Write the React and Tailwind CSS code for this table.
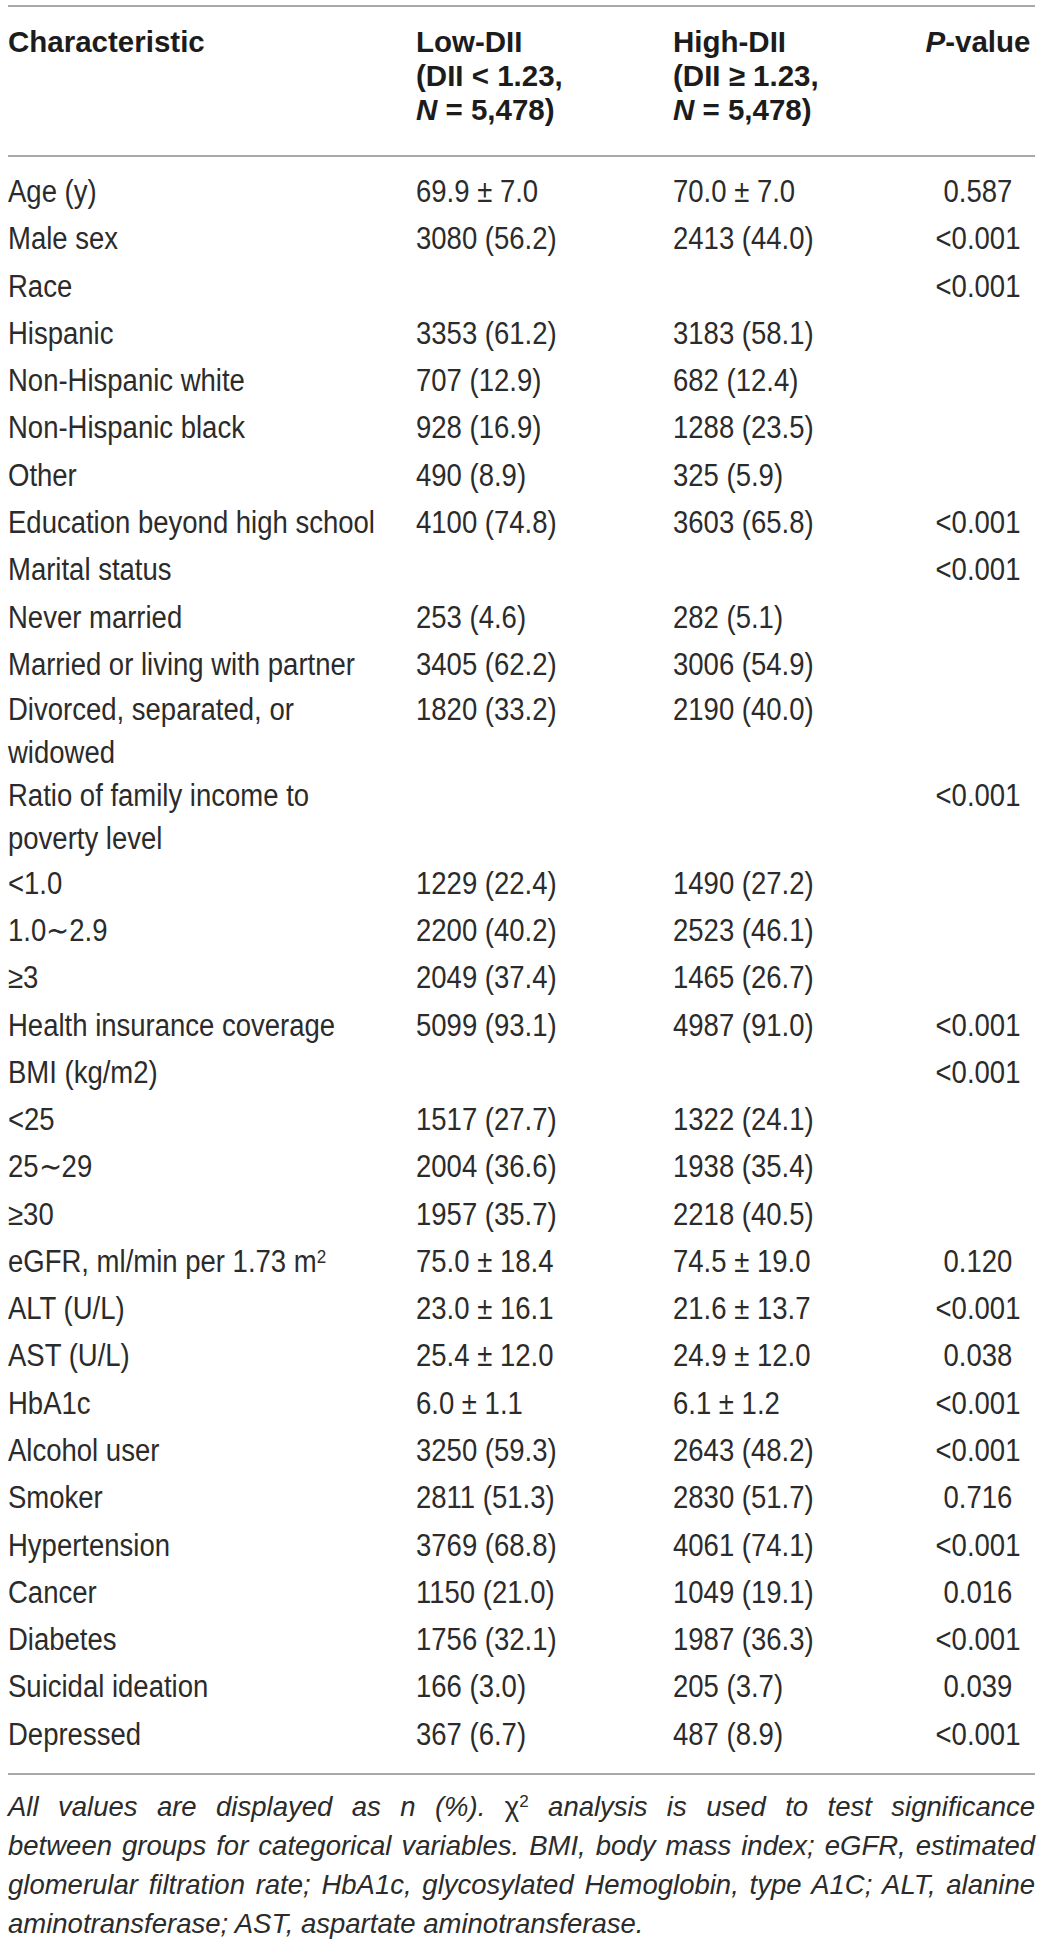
import React from "react";

const sans = { fontFamily: '"Liberation Sans", Arial, sans-serif' };

const rows = [
  ["Age (y)", "69.9 ± 7.0", "70.0 ± 7.0", "0.587"],
  ["Male sex", "3080 (56.2)", "2413 (44.0)", "<0.001"],
  ["Race", "", "", "<0.001"],
  ["Hispanic", "3353 (61.2)", "3183 (58.1)", ""],
  ["Non-Hispanic white", "707 (12.9)", "682 (12.4)", ""],
  ["Non-Hispanic black", "928 (16.9)", "1288 (23.5)", ""],
  ["Other", "490 (8.9)", "325 (5.9)", ""],
  ["Education beyond high school", "4100 (74.8)", "3603 (65.8)", "<0.001"],
  ["Marital status", "", "", "<0.001"],
  ["Never married", "253 (4.6)", "282 (5.1)", ""],
  ["Married or living with partner", "3405 (62.2)", "3006 (54.9)", ""],
  [["Divorced, separated, or", "widowed"], "1820 (33.2)", "2190 (40.0)", ""],
  [["Ratio of family income to", "poverty level"], "", "", "<0.001"],
  ["<1.0", "1229 (22.4)", "1490 (27.2)", ""],
  ["1.0∼2.9", "2200 (40.2)", "2523 (46.1)", ""],
  ["≥3", "2049 (37.4)", "1465 (26.7)", ""],
  ["Health insurance coverage", "5099 (93.1)", "4987 (91.0)", "<0.001"],
  ["BMI (kg/m2)", "", "", "<0.001"],
  ["<25", "1517 (27.7)", "1322 (24.1)", ""],
  ["25∼29", "2004 (36.6)", "1938 (35.4)", ""],
  ["≥30", "1957 (35.7)", "2218 (40.5)", ""],
  ["egfr", "75.0 ± 18.4", "74.5 ± 19.0", "0.120"],
  ["ALT (U/L)", "23.0 ± 16.1", "21.6 ± 13.7", "<0.001"],
  ["AST (U/L)", "25.4 ± 12.0", "24.9 ± 12.0", "0.038"],
  ["HbA1c", "6.0 ± 1.1", "6.1 ± 1.2", "<0.001"],
  ["Alcohol user", "3250 (59.3)", "2643 (48.2)", "<0.001"],
  ["Smoker", "2811 (51.3)", "2830 (51.7)", "0.716"],
  ["Hypertension", "3769 (68.8)", "4061 (74.1)", "<0.001"],
  ["Cancer", "1150 (21.0)", "1049 (19.1)", "0.016"],
  ["Diabetes", "1756 (32.1)", "1987 (36.3)", "<0.001"],
  ["Suicidal ideation", "166 (3.0)", "205 (3.7)", "0.039"],
  ["Depressed", "367 (6.7)", "487 (8.9)", "<0.001"],
];

const Rule = () => <div className="h-[2px] bg-[#a9a9a9]" />;

const Label = ({ value }) => {
  if (value === "egfr") {
    return (
      <span>
        eGFR, ml/min per 1.73 m<sup className="text-[0.62em]">2</sup>
      </span>
    );
  }
  if (Array.isArray(value)) {
    return (
      <span>
        {value[0]}
        <br />
        {value[1]}
      </span>
    );
  }
  return <span>{value}</span>;
};

const FootLine = ({ children, last }) => (
  <div className={last ? "whitespace-nowrap text-left" : "text-justify [text-align-last:justify]"}>{children}</div>
);

export default function App() {
  return (
    <div className="w-[1043px] bg-white px-2 pt-[5px] text-[#222]" style={sans}>
      <Rule />

      {/* header */}
      <div className="grid grid-cols-[408px_257px_250px_110px] pt-[18px] pb-[28px] text-[29.5px] leading-[34px] font-bold text-[#1c1c1c]">
        <div>Characteristic</div>
        <div>
          Low-DII
          <br />
          (DII &lt; 1.23,
          <br />
          <i>N</i> = 5,478)
        </div>
        <div>
          High-DII
          <br />
          (DII ≥ 1.23,
          <br />
          <i>N</i> = 5,478)
        </div>
        <div className="whitespace-nowrap text-center">
          <i>P</i>-value
        </div>
      </div>

      <Rule />

      {/* body */}
      <div className="pt-[12px] pb-[13.5px] text-[27.5px] leading-[38.5px] text-[#2b2b2b]">
        {rows.map((r, i) => (
          <div key={i} className="grid grid-cols-[408px_257px_250px_110px] py-[4.4px] scale-y-[1.12]">
            <div className="whitespace-nowrap">
              <Label value={r[0]} />
            </div>
            <div className="whitespace-nowrap">{r[1]}</div>
            <div className="whitespace-nowrap">{r[2]}</div>
            <div className="whitespace-nowrap text-center">{r[3]}</div>
          </div>
        ))}
      </div>

      <Rule />

      {/* footnote */}
      <div className="mt-[12px] text-[27.5px] leading-[39px] italic text-[#2b2b2b]">
        <FootLine>
          All values are displayed as n (%). <span className="not-italic">χ</span>
          <sup className="text-[0.62em] not-italic">2</sup> analysis is used to test significance
        </FootLine>
        <FootLine>between groups for categorical variables. BMI, body mass index; eGFR, estimated</FootLine>
        <FootLine>glomerular filtration rate; HbA1c, glycosylated Hemoglobin, type A1C; ALT, alanine</FootLine>
        <FootLine last>aminotransferase; AST, aspartate aminotransferase.</FootLine>
      </div>
    </div>
  );
}
